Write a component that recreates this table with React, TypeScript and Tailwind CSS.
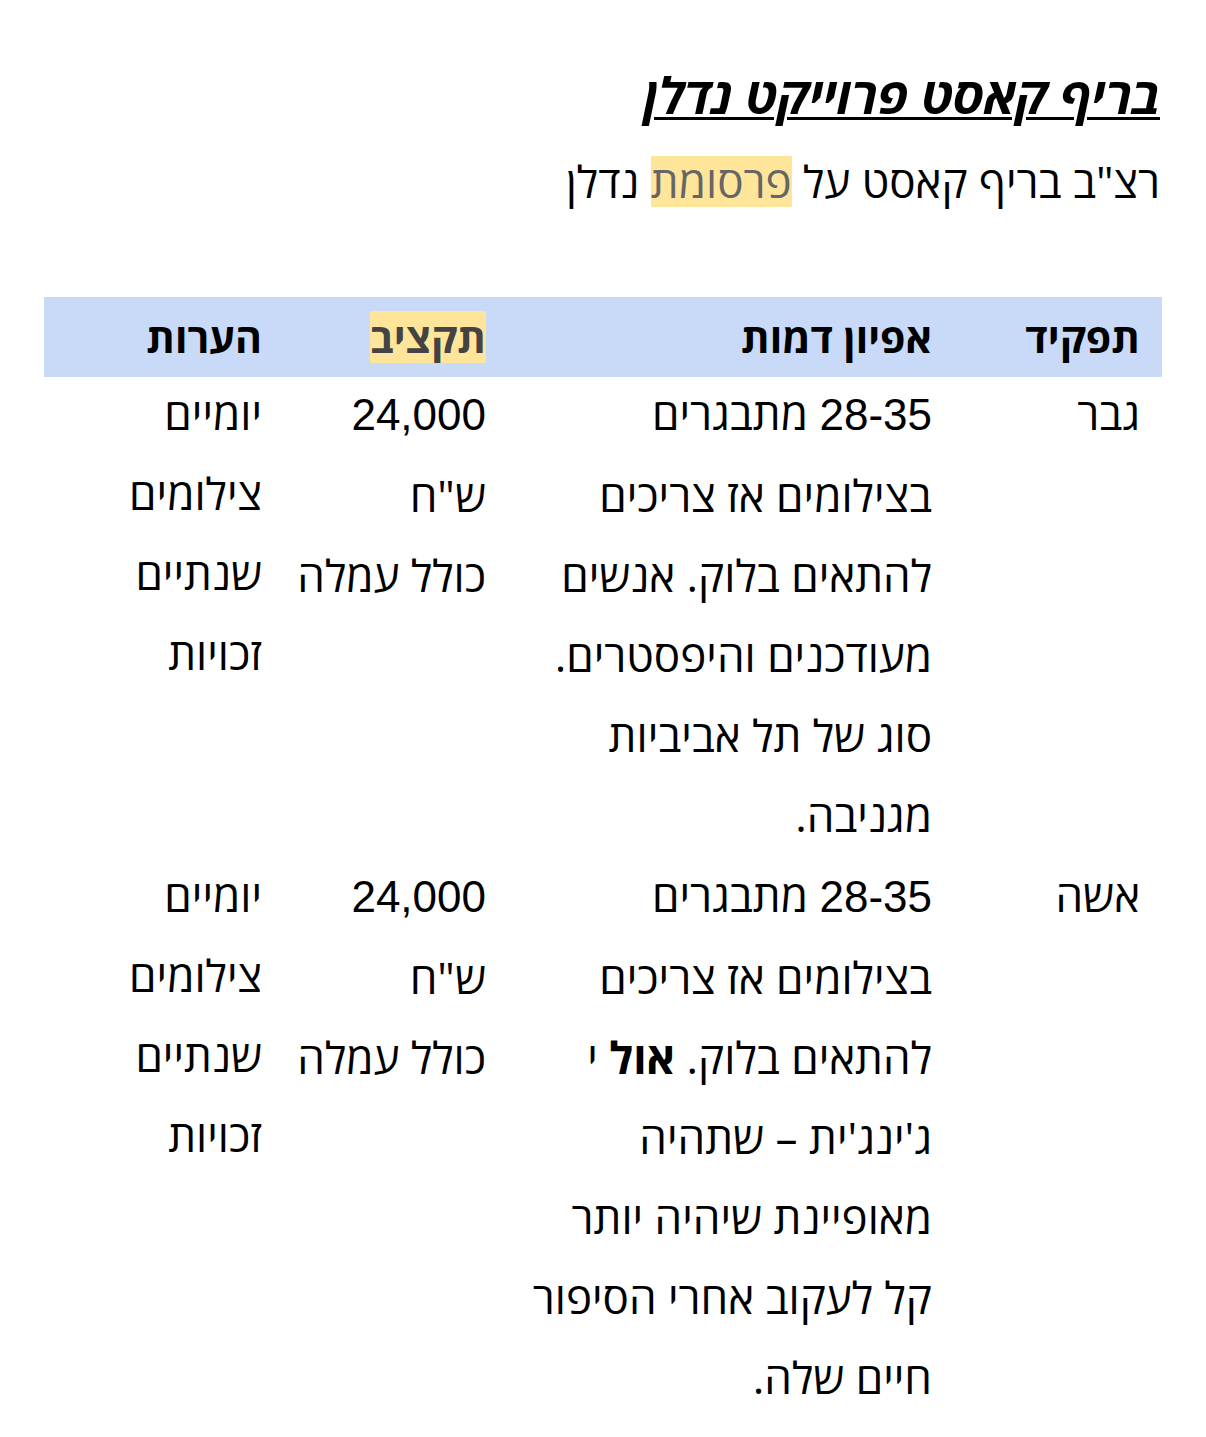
const HEB = "font-['Open_Sans','Liberation_Sans',sans-serif]";
const NUM = "font-['Liberation_Sans',Arial,sans-serif]";

type Row = {
  role: string;
  desc: React.ReactNode[];
  budget: React.ReactNode[];
  notes: string[];
};

const Num = ({ children }: { children: React.ReactNode }) => <span className={NUM}>{children}</span>;

const BUDGET = [<Num>24,000</Num>, 'ש"ח', "כולל עמלה"];
const NOTES = ["יומיים", "צילומים", "שנתיים", "זכויות"];

const ROWS: Row[] = [
  {
    role: "גבר",
    desc: [
      <>
        <Num>28-35</Num> מתבגרים
      </>,
      "בצילומים אז צריכים",
      "להתאים בלוק. אנשים",
      "מעודכנים והיפסטרים.",
      "סוג של תל אביביות",
      "מגניבה.",
    ],
    budget: BUDGET,
    notes: NOTES,
  },
  {
    role: "אשה",
    desc: [
      <>
        <Num>28-35</Num> מתבגרים
      </>,
      "בצילומים אז צריכים",
      <>
        להתאים בלוק. <b>אול</b> י
      </>,
      "ג'ינג'ית – שתהיה",
      "מאופיינת שיהיה יותר",
      "קל לעקוב אחרי הסיפור",
      "חיים שלה.",
    ],
    budget: BUDGET,
    notes: NOTES,
  },
];

function Lines({ items }: { items: React.ReactNode[] }) {
  return (
    <>
      {items.map((t, i) => (
        <div key={i} className="whitespace-nowrap">
          {t}
        </div>
      ))}
    </>
  );
}

export default function App() {
  return (
    <div dir="rtl" className={`${HEB} bg-white text-black min-h-[1437px] px-[44px] pt-[63px] text-[44px] leading-[80px]`}>
      {/* Title */}
      <h1 className="text-[50px] leading-[64px] font-bold italic underline underline-offset-[3px] decoration-[3px] pr-[2px]">
        בריף קאסט פרוייקט נדלן
      </h1>
      <p className="leading-[60px] mt-[24px] pr-[2px]">
        רצ"ב בריף קאסט על{" "}
        <span className="inline-block h-[51px] leading-[51px] bg-[#ffe599] text-[#666666]">פרסומת</span> נדלן
      </p>

      {/* Table */}
      <div className="mt-[86px]">
        <div className="grid grid-cols-[208px_446px_224px_240px] bg-[#c9daf8] font-bold text-[41px] h-[80px]">
          <div className="pr-[22px]">תפקיד</div>
          <div className="pr-[22px]">אפיון דמות</div>
          <div className="pr-[22px]">
            <span className="inline-block h-[52px] leading-[52px] bg-[#ffe599] text-[#434343]">תקציב</span>
          </div>
          <div className="pr-[22px]">הערות</div>
        </div>
        <div className="mt-[-4px]">
          {ROWS.map((r) => (
            <div key={r.role} className="grid grid-cols-[208px_446px_224px_240px]">
              <div className="pr-[22px]">{r.role}</div>
              <div className="pr-[22px]">
                <Lines items={r.desc} />
              </div>
              <div className="pr-[22px]">
                <Lines items={r.budget} />
              </div>
              <div className="pr-[22px]">
                <Lines items={r.notes} />
              </div>
            </div>
          ))}
        </div>
      </div>
    </div>
  );
}
